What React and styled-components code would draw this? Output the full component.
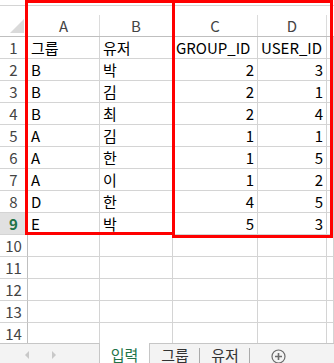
import React from 'react';
import styled, { createGlobalStyle } from 'styled-components';

const GlobalStyle = createGlobalStyle`
  html, body {
    margin: 0;
    padding: 0;
    background: #fff;
  }
  body {
    font-family: 'Noto Sans CJK KR', 'Noto Sans', sans-serif;
  }
`;

const Window = styled.div`
  position: relative;
  width: 334px;
  height: 363px;
  display: flex;
  flex-direction: column;
  overflow: hidden;
  background: #fff;
`;

const FormulaEdge = styled.div`
  height: 6px;
  flex: none;
  box-sizing: border-box;
  border-bottom: 1px solid #d4d4d4;
`;

const Sheet = styled.div`
  flex: 1;
  overflow: hidden;
  display: grid;
  grid-template-columns: 28px 72px 73px 85px 69px 1fr;
  grid-auto-rows: 22px;
  grid-template-rows: 31px;
  align-content: start;
`;

const Corner = styled.div`
  box-sizing: border-box;
  border-right: 1px solid #bfbfbf;
  border-bottom: 1px solid #bfbfbf;
  display: flex;
  align-items: flex-end;
  justify-content: flex-end;
  padding: 0 3px 3px 0;

  &::after {
    content: '';
    width: 14px;
    height: 14px;
    background: #dadada;
    clip-path: polygon(100% 0, 100% 100%, 0 100%);
  }
`;

const ColHead = styled.div`
  box-sizing: border-box;
  border-bottom: 1px solid #bfbfbf;
  display: flex;
  align-items: flex-end;
  font-size: 15px;
  color: #444;

  span {
    flex: 1;
    height: 21px;
    line-height: 21px;
    text-align: center;
    box-sizing: border-box;
    border-right: 1px solid ${p => (p.$last ? 'transparent' : '#dcdcdc')};
  }
`;

const RowHead = styled.div`
  box-sizing: border-box;
  border-right: 1px solid #bfbfbf;
  border-bottom: 1px solid #d4d4d4;
  background: ${p => (p.$active ? '#e1e1e1' : '#fff')};
  color: ${p => (p.$active ? '#217346' : '#444')};
  font-weight: ${p => (p.$active ? 700 : 400)};
  font-size: 15px;
  line-height: 21px;
  text-align: center;
`;

const Cell = styled.div`
  box-sizing: border-box;
  border-right: 1px solid #d4d4d4;
  border-bottom: 1px solid #d4d4d4;
  padding: 0 3px;
  font-size: 15px;
  line-height: 21px;
  color: #000;
  white-space: nowrap;
  overflow: hidden;
  text-align: ${p => (p.$num ? 'right' : 'left')};
`;

const Selection = styled.div`
  position: absolute;
  box-sizing: border-box;
  border: 3px solid #ff0000;
  pointer-events: none;
`;

const TabBar = styled.div`
  height: 20px;
  flex: none;
  display: flex;
  font-size: 15px;
`;

const NavArea = styled.div`
  width: 100px;
  box-sizing: border-box;
  background: #f3f3f3;
  border-top: 1px solid #c6c6c6;
  border-right: 1px solid #c6c6c6;
  display: flex;
  align-items: center;
  padding: 2px 0 0 25px;
  gap: 23px;
`;

const Arrow = styled.span`
  width: 0;
  height: 0;
  border-top: 4px solid transparent;
  border-bottom: 4px solid transparent;
  ${p =>
    p.$dir === 'left'
      ? 'border-right: 4px solid #c8c8c8;'
      : 'border-left: 4px solid #c8c8c8;'}
`;

const ActiveTab = styled.div`
  width: 49px;
  background: #fff;
  color: #217346;
  text-align: center;
  line-height: 24px;
`;

const TabStrip = styled.div`
  flex: 1;
  display: flex;
  box-sizing: border-box;
  background: #f3f3f3;
  border-top: 1px solid #c6c6c6;
  border-left: 1px solid #c6c6c6;
`;

const Tab = styled.div`
  width: 50px;
  box-sizing: border-box;
  color: #333;
  text-align: center;
  line-height: 22px;
  position: relative;

  &::after {
    content: '';
    position: absolute;
    right: 0;
    top: 4px;
    bottom: 0;
    border-right: 1px solid #aaa;
  }
`;

const AddSheet = styled.div`
  flex: 1;
  display: flex;
  align-items: center;
  justify-content: center;
  padding: 6px 28px 0 0;
`;

const columns = ['A', 'B', 'C', 'D'];

const rows = [
  ['그룹', '유저', 'GROUP_ID', 'USER_ID'],
  ['B', '박', 2, 3],
  ['B', '김', 2, 1],
  ['B', '최', 2, 4],
  ['A', '김', 1, 1],
  ['A', '한', 1, 5],
  ['A', '이', 1, 2],
  ['D', '한', 4, 5],
  ['E', '박', 5, 3],
];

const TOTAL_ROWS = 14;
const ACTIVE_ROW = 9;

function PlusCircle() {
  return (
    <svg width="15" height="15" viewBox="0 0 15 15">
      <circle cx="7.5" cy="7.5" r="6.5" fill="none" stroke="#6b6b6b" strokeWidth="1.2" />
      <path d="M7.5 4v7M4 7.5h7" stroke="#6b6b6b" strokeWidth="1.6" />
    </svg>
  );
}

export default function App() {
  const lines = Array.from({ length: TOTAL_ROWS }, (_, i) => rows[i] || ['', '', '', '']);

  return (
    <Window>
      <GlobalStyle />
      <FormulaEdge />
      <Sheet>
        <Corner />
        {columns.map(c => (
          <ColHead key={c}>
            <span>{c}</span>
          </ColHead>
        ))}
        <ColHead $last>
          <span />
        </ColHead>

        {lines.map((r, i) => (
          <React.Fragment key={i}>
            <RowHead $active={i + 1 === ACTIVE_ROW}>{i + 1}</RowHead>
            {r.map((v, j) => (
              <Cell key={j} $num={typeof v === 'number'}>
                {v}
              </Cell>
            ))}
            <Cell />
          </React.Fragment>
        ))}
      </Sheet>
      <TabBar>
        <NavArea>
          <Arrow $dir="left" />
          <Arrow $dir="right" />
        </NavArea>
        <ActiveTab>입력</ActiveTab>
        <TabStrip>
          <Tab>그룹</Tab>
          <Tab>유저</Tab>
          <AddSheet>
            <PlusCircle />
          </AddSheet>
        </TabStrip>
      </TabBar>

      <Selection style={{ left: 25, top: 0, width: 150, height: 235 }} />
      <Selection style={{ left: 172, top: 0, width: 161, height: 238 }} />
    </Window>
  );
}
